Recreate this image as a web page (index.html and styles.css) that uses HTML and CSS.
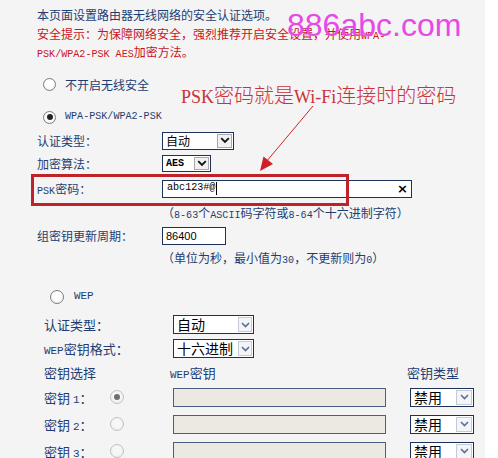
FILE: index.html
```html
<!DOCTYPE html>
<html lang="zh-CN">
<head>
<meta charset="utf-8">
<title>无线安全设置</title>
<link rel="stylesheet" href="styles.css">
</head>
<body>
<div class="page">
  <div class="intro">
    <div class="line">本页面设置路由器无线网络的安全认证选项。</div>
    <div class="line warn">安全提示：为保障网络安全，强烈推荐开启安全设置，并使用<span class="m">WPA-</span></div>
    <div class="line warn"><span class="m">PSK/WPA2-PSK AES</span>加密方法。</div>
  </div>

  <div class="opt opt-first"><span class="radio"></span><span>不开启无线安全</span></div>
  <div class="opt opt-second"><span class="radio on"></span><span class="m">WPA-PSK/WPA2-PSK</span></div>

  <div class="row r-auth"><span class="lbl">认证类型：</span>
    <span class="sel sel-auto"><span class="val">自动</span><span class="btn"><svg width="10" height="7" viewBox="0 0 10 7"><path d="M1.2 1.2 L5 5 L8.8 1.2" fill="none" stroke="#111" stroke-width="1.8"/></svg></span></span>
  </div>
  <div class="row r-enc"><span class="lbl">加密算法：</span>
    <span class="sel sel-aes"><span class="val m b">AES</span><span class="btn"><svg width="10" height="7" viewBox="0 0 10 7"><path d="M1.2 1.2 L5 5 L8.8 1.2" fill="none" stroke="#111" stroke-width="1.8"/></svg></span></span>
  </div>
  <div class="row r-psk"><span class="lbl"><span class="m">PSK</span>密码：</span>
    <span class="inp inp-psk"><span class="m txt">abc123#@</span><span class="caret"></span><span class="clr">×</span></span>
  </div>
  <div class="hint h-psk">（<span class="m">8-63</span>个<span class="m">ASCII</span>码字符或<span class="m">8-64</span>个十六进制字符）</div>
  <div class="row r-grp"><span class="lbl">组密钥更新周期：</span>
    <span class="inp inp-grp"><span class="txt num">86400</span></span>
  </div>
  <div class="hint h-grp">（单位为秒，最小值为<span class="m">30</span>，不更新则为<span class="m">0</span>）</div>

  <div class="wep">
    <div class="wopt"><span class="radio big"></span><span class="m">WEP</span></div>
    <div class="wrow"><span class="wlbl">认证类型：</span>
      <span class="sel wsel"><span class="val">自动</span><span class="btn lt"><svg width="9" height="6" viewBox="0 0 9 6"><path d="M1 1 L4.5 4.5 L8 1" fill="none" stroke="#5b6f96" stroke-width="1.6"/></svg></span></span>
    </div>
    <div class="wrow"><span class="wlbl"><span class="m">WEP</span>密钥格式：</span>
      <span class="sel wsel"><span class="val">十六进制</span><span class="btn lt"><svg width="9" height="6" viewBox="0 0 9 6"><path d="M1 1 L4.5 4.5 L8 1" fill="none" stroke="#5b6f96" stroke-width="1.6"/></svg></span></span>
    </div>
    <div class="khead"><span>密钥选择</span><span class="kh2"><span class="m">WEP</span>密钥</span><span class="kh3">密钥类型</span></div>
    <div class="krow"><span class="kcell"><span class="klbl">密钥 <span class="m">1</span>：</span><span class="radio big dis on"></span></span><span class="kinp"></span>
      <span class="sel ksel"><span class="val">禁用</span><span class="btn lt"><svg width="9" height="6" viewBox="0 0 9 6"><path d="M1 1 L4.5 4.5 L8 1" fill="none" stroke="#5b6f96" stroke-width="1.6"/></svg></span></span></div>
    <div class="krow"><span class="kcell"><span class="klbl">密钥 <span class="m">2</span>：</span><span class="radio big dis"></span></span><span class="kinp"></span>
      <span class="sel ksel"><span class="val">禁用</span><span class="btn lt"><svg width="9" height="6" viewBox="0 0 9 6"><path d="M1 1 L4.5 4.5 L8 1" fill="none" stroke="#5b6f96" stroke-width="1.6"/></svg></span></span></div>
    <div class="krow"><span class="kcell"><span class="klbl">密钥 <span class="m">3</span>：</span><span class="radio big dis"></span></span><span class="kinp"></span>
      <span class="sel ksel"><span class="val">禁用</span><span class="btn lt"><svg width="9" height="6" viewBox="0 0 9 6"><path d="M1 1 L4.5 4.5 L8 1" fill="none" stroke="#5b6f96" stroke-width="1.6"/></svg></span></span></div>
  </div>

  <div class="watermark">886abc.com</div>
  <div class="note"><span class="nl">PSK</span>密码就是<span class="nl">Wi-Fi</span>连接时的密码</div>
  <svg class="arrow" width="485" height="458" viewBox="0 0 485 458">
    <line x1="313" y1="106" x2="266" y2="162" stroke="#d0202a" stroke-width="1"/>
    <polygon points="260,171 263.5,156.5 273,164" fill="#d0202a"/>
  </svg>
  <div class="redbox"></div>
</div>
</body>
</html>
```
FILE: styles.css
```css
html, body {
  margin: 0;
  padding: 0;
  background: #ffffff;
}
body {
  font-family: "Noto Sans CJK SC", "Noto Sans", sans-serif;
  font-size: 12px;
  color: #1e3d72;
}
.page {
  position: relative;
  width: 485px;
  height: 458px;
  background: #f4f4f4;
  overflow: hidden;
}
.m {
  font-family: "Liberation Mono", monospace;
  font-size: 0.84em;
  line-height: 1;
}
.b { font-weight: bold; }

.intro {
  padding: 6px 0 0 37px;
}
.intro .line {
  height: 18.5px;
  line-height: 18.5px;
  white-space: nowrap;
}
.warn { color: #c8161d; }

.radio {
  position: relative;
  flex: none;
  width: 13px;
  height: 13px;
  box-sizing: border-box;
  border-radius: 50%;
  border: 1px solid #7d7d7d;
  background: radial-gradient(circle at 50% 45%, #ffffff 45%, #e4e4e4 100%);
}
.radio.big { width: 14px; height: 14px; }
.radio.on::after {
  content: "";
  position: absolute;
  left: 50%;
  top: 50%;
  width: 6px;
  height: 6px;
  margin: -3px 0 0 -3px;
  border-radius: 50%;
  background: #222;
}
.radio.dis {
  border-color: #c2c2c2;
  background: radial-gradient(circle at 50% 45%, #f6f6f6 45%, #e6e6e6 100%);
}
.radio.dis.on::after { background: #6f6f6f; }

.opt {
  display: flex;
  align-items: center;
  gap: 9px;
  height: 24px;
  padding-left: 43px;
}
.opt-first { margin-top: 11px; }
.opt-second { margin-top: 9px; height: 23px; }

.row {
  display: flex;
  align-items: center;
  padding-left: 37px;
  height: 24px;
}
.r-enc { height: 22px; }
.r-psk { margin-top: 2px; }
.lbl { flex: none; width: 125px; white-space: nowrap; }

.sel {
  display: flex;
  align-items: stretch;
  box-sizing: border-box;
  height: 18px;
  border: 1px solid #1d3159;
  background: #ffffff;
  color: #000;
}
.sel .val {
  flex: 1;
  padding-left: 3px;
  line-height: 16px;
  white-space: nowrap;
}
.sel .btn {
  flex: none;
  width: 15px;
  margin: 1px;
  box-sizing: border-box;
  border: 1px solid #a9a9a9;
  background: #f1f1f1;
  display: flex;
  align-items: center;
  justify-content: center;
}
.sel .btn.lt {
  border-color: #c5cbd6;
  background: #f4f5f8;
}
.sel-auto { width: 72px; }
.sel-aes { width: 49px; height: 17px; }
.sel-aes .val { line-height: 15px; }

.inp {
  display: flex;
  align-items: center;
  box-sizing: border-box;
  height: 18px;
  border: 1px solid #1d3159;
  background: #ffffff;
  color: #000;
  padding-left: 4px;
}
.inp-psk { width: 250px; }
.inp-grp { width: 64px; height: 18px; padding-left: 3px; }
.txt { white-space: nowrap; }
.num { font-family: "Liberation Sans", sans-serif; font-size: 11px; }
.caret {
  width: 1px;
  height: 13px;
  margin-left: 1px;
  background: #000;
}
.clr {
  margin-left: auto;
  margin-right: 3px;
  font-family: "DejaVu Sans", sans-serif;
  font-size: 13px;
  font-weight: bold;
  line-height: 14px;
}

.hint {
  padding-left: 162px;
  height: 23px;
  line-height: 23px;
  white-space: nowrap;
}
.h-grp { height: 20px; line-height: 20px; }

.wep {
  font-size: 13px;
  padding-left: 44px;
}
.wopt {
  display: flex;
  align-items: center;
  gap: 10px;
  height: 24px;
  margin-top: 17px;
  padding-left: 6px;
}
.wrow {
  display: flex;
  align-items: center;
  height: 24px;
}
.wopt + .wrow { margin-top: 4px; }
.wlbl { flex: none; width: 129px; white-space: nowrap; }
.wsel { width: 81px; height: 19px; font-size: 14px; }
.wsel .val { line-height: 17px; }
.wsel .btn { width: 14px; }

.khead {
  display: grid;
  grid-template-columns: 126px 237px auto;
  align-items: center;
  height: 23px;
  white-space: nowrap;
}
.krow {
  display: grid;
  grid-template-columns: 129px 237px auto;
  align-items: center;
  height: 27px;
}
.kcell { display: flex; align-items: center; }
.klbl { width: 66px; white-space: nowrap; }
.kinp {
  width: 213px;
  height: 19px;
  box-sizing: border-box;
  border: 1px solid #4b5e82;
  background: #ebe9e2;
}
.ksel { width: 64px; height: 19px; font-size: 14px; }
.ksel .val { line-height: 17px; }
.ksel .btn { width: 16px; }

.watermark {
  position: absolute;
  left: 287px;
  top: 9px;
  font-family: "Liberation Sans", sans-serif;
  font-size: 32px;
  line-height: 32px;
  color: #e64ae6;
  white-space: nowrap;
}
.note {
  position: absolute;
  left: 181px;
  top: 85px;
  font-size: 20px;
  line-height: 20px;
  font-weight: 300;
  color: #c7333a;
  white-space: nowrap;
}
.note .nl {
  font-family: "Liberation Serif", serif;
  font-size: 18px;
  font-weight: normal;
}
.arrow {
  position: absolute;
  left: 0;
  top: 0;
  pointer-events: none;
}
.redbox {
  position: absolute;
  left: 31px;
  top: 174px;
  width: 318px;
  height: 32px;
  box-sizing: border-box;
  border: 3px solid #c0222a;
}
```
